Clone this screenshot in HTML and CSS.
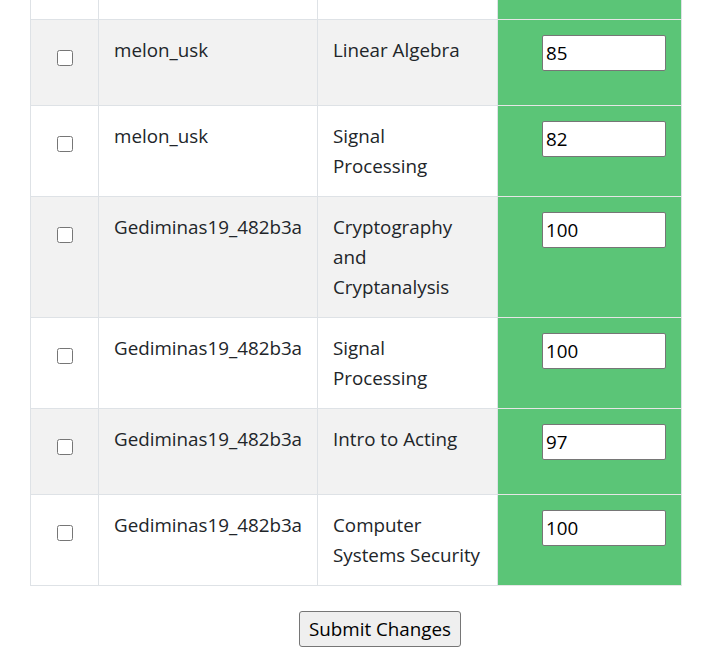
FILE: index.html
```html
<!DOCTYPE html>
<html>
<head>
<meta charset="utf-8">
<link rel="stylesheet" href="styles.css">
</head>
<body>
<div class="page">
  <table class="grades">
    <colgroup>
      <col class="col-check">
      <col class="col-user">
      <col class="col-course">
      <col class="col-grade">
    </colgroup>
    <tr class="row cut">
      <td class="c-check"></td><td class="c-user"></td><td class="c-course"></td><td class="c-grade"></td>
    </tr>
    <tr class="row alt">
      <td class="c-check"><input type="checkbox" class="chk"></td>
      <td class="c-user">melon_usk</td>
      <td class="c-course">Linear Algebra</td>
      <td class="c-grade"><input type="text" class="grade" value="85"></td>
    </tr>
    <tr class="row">
      <td class="c-check"><input type="checkbox" class="chk"></td>
      <td class="c-user">melon_usk</td>
      <td class="c-course">Signal Processing</td>
      <td class="c-grade"><input type="text" class="grade" value="82"></td>
    </tr>
    <tr class="row alt">
      <td class="c-check"><input type="checkbox" class="chk"></td>
      <td class="c-user">Gediminas19_482b3a</td>
      <td class="c-course">Cryptography and Cryptanalysis</td>
      <td class="c-grade"><input type="text" class="grade" value="100"></td>
    </tr>
    <tr class="row">
      <td class="c-check"><input type="checkbox" class="chk"></td>
      <td class="c-user">Gediminas19_482b3a</td>
      <td class="c-course">Signal Processing</td>
      <td class="c-grade"><input type="text" class="grade" value="100"></td>
    </tr>
    <tr class="row alt">
      <td class="c-check"><input type="checkbox" class="chk"></td>
      <td class="c-user">Gediminas19_482b3a</td>
      <td class="c-course">Intro to Acting</td>
      <td class="c-grade"><input type="text" class="grade" value="97"></td>
    </tr>
    <tr class="row">
      <td class="c-check"><input type="checkbox" class="chk"></td>
      <td class="c-user">Gediminas19_482b3a</td>
      <td class="c-course">Computer Systems Security</td>
      <td class="c-grade"><input type="text" class="grade" value="100"></td>
    </tr>
  </table>
  <div class="actions">
    <button class="submit" type="button">Submit Changes</button>
  </div>
</div>
</body>
</html>
```
FILE: styles.css
```css
html, body {
  margin: 0;
  padding: 0;
  background: #ffffff;
}
body {
  font-family: "Open Sans", "Noto Sans", sans-serif;
  font-size: 18.8px;
  color: #212529;
}
.page {
  padding: 0 0 20px 30px;
}
.grades {
  border-collapse: collapse;
  table-layout: fixed;
  width: 651px;
}
.col-check { width: 68px; }
.col-user { width: 219px; }
.col-course { width: 180px; }
.col-grade { width: 184px; }
.grades td {
  border: 1px solid #dee2e6;
  padding: 15px;
  line-height: 30px;
  vertical-align: top;
  text-align: left;
}
.row.alt td {
  background: #f2f2f2;
}
.row.cut td {
  border-top: none;
  padding: 0;
  height: 19px;
}
.grades td.c-grade {
  background: #5bc577;
  text-align: right;
  border-color: #dee2e6 #dee2e6 #e6e6e6 #dee2e6;
}
.grades td.c-check {
  text-align: center;
}
.chk {
  display: block;
  width: 16px;
  height: 16px;
  margin: 15px auto 0;
}
.grade {
  display: block;
  margin: 0 0 19px auto;
  box-sizing: border-box;
  width: 124px;
  height: 36px;
  padding: 2px 3px;
  border: 1px solid #767676;
  border-radius: 2px;
  font-family: "Open Sans", "Noto Sans", sans-serif;
  font-size: 18.8px;
  color: #000;
  background: #fff;
}
.actions {
  display: flex;
  justify-content: center;
  padding: 25px 0 0 6px;
}
.submit {
  box-sizing: border-box;
  width: 162px;
  height: 36px;
  font-family: "Open Sans", "Noto Sans", sans-serif;
  font-size: 18.8px;
  color: #000;
  background: #efefef;
  border: 1px solid #767676;
  border-radius: 3px;
  padding: 0 6px;
}
```
